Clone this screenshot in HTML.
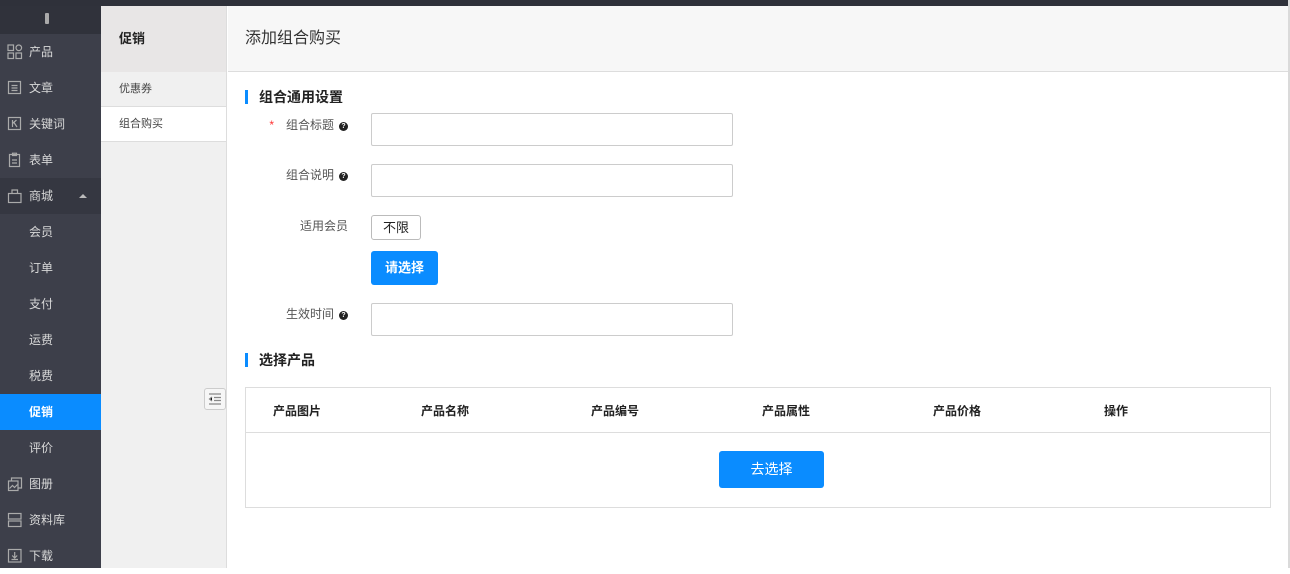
<!DOCTYPE html>
<html><head><meta charset="utf-8"><style>
*{margin:0;padding:0;box-sizing:border-box}
body{width:1290px;height:568px;overflow:hidden;background:#fff;font-family:"Liberation Sans","Noto Sans CJK SC",sans-serif;position:relative;font-size:12px}
.topbar{position:absolute;left:0;top:0;width:1290px;height:6px;background:#2f313a}
.side{position:absolute;left:0;top:0;width:101px;height:568px;background:#3d3f4a}
.logo{height:34px;background:#30323b;position:relative}
.logo i{position:absolute;left:45px;top:13px;width:4px;height:11px;background:#aaa;border-radius:1px}
.it{height:36px;line-height:36px;color:#d8d8d8;font-size:12px;position:relative;padding-left:29px}
.it svg{position:absolute;left:7px;top:10px}
.it.dk{background:#353741}
.it.act{background:#0a8cff;color:#fff;font-weight:bold}
.tri{position:absolute;left:79px;top:16px;border:4px solid transparent;border-bottom:4px solid #bbb;border-top:0}
.p2{position:absolute;left:101px;top:6px;width:126px;height:562px;background:#f0f0f0;border-right:1px solid #ddd}
.p2h{height:66px;background:#e8e6e6;line-height:66px;padding-left:18px;font-weight:bold;font-size:13px;color:#222}
.p2i{height:35px;line-height:35px;padding-left:18px;font-size:11px;color:#444;border-bottom:1px solid #ddd}
.coll{position:absolute;left:204px;top:388px;width:22px;height:22px;border:1px solid #ccc;border-radius:3px;background:#f6f6f6}
.mh{position:absolute;left:228px;top:6px;width:1060px;height:66px;background:#f7f7f7;border-bottom:1px solid #ddd;padding-left:17px;line-height:66px;font-size:16px;color:#333}
.rbar{position:absolute;left:1288px;top:0;width:2px;height:568px;background:#dadada}
.sec{position:absolute;left:245px;font-size:14px;font-weight:bold;color:#222;padding-left:11px;border-left:3px solid #0a8cff;line-height:14px}
.lab{position:absolute;width:120px;left:228px;text-align:right;font-size:12px;color:#555}
.q{display:inline-block;width:9px;height:9px;border-radius:50%;background:#222;color:#fff;font-size:7px;line-height:9px;text-align:center;font-weight:bold;margin-left:5px;vertical-align:1px}
.inp{position:absolute;left:371px;width:362px;height:33px;border:1px solid #ccc;border-radius:2px;background:#fff}
.btn{position:absolute;background:#0a8cff;color:#fff;border-radius:3px;text-align:center;font-weight:bold}
.tbl{position:absolute;left:245px;top:387px;width:1026px;height:121px;border:1px solid #ddd}
.th{position:absolute;top:14px;font-size:12px;color:#222;font-weight:bold}
</style></head><body>
<div class="side">
<div class="logo"><i></i></div>
<div class="it"><svg width="16" height="16" fill="none" stroke="#aaa" stroke-width="1.2"><rect x="1" y="1" width="5.5" height="5.5"/><rect x="1" y="9" width="5.5" height="5.5"/><rect x="9" y="9" width="5.5" height="5.5"/><circle cx="11.8" cy="3.8" r="2.8"/></svg>产品</div>
<div class="it"><svg width="16" height="16" fill="none" stroke="#aaa" stroke-width="1.2"><rect x="1.5" y="1.5" width="12" height="12"/><path d="M4.5 5.5h6M4.5 8h6M4.5 10.5h6"/></svg>文章</div>
<div class="it"><svg width="16" height="16" fill="none" stroke="#aaa" stroke-width="1.2"><rect x="1.5" y="1.5" width="12" height="12"/><path d="M5.5 4v7M5.5 7.5l4-3.5M7 6.5l3 4.5"/></svg>关键词</div>
<div class="it"><svg width="16" height="16" fill="none" stroke="#aaa" stroke-width="1.2"><rect x="2.5" y="2.5" width="10" height="12"/><path d="M5.5 1.2h4v2.3h-4zM5 8h5M5 11h5"/></svg>表单</div>
<div class="it dk"><svg width="16" height="16" fill="none" stroke="#aaa" stroke-width="1.2"><rect x="1.5" y="5.5" width="12.5" height="9"/><path d="M5 5.5V2h5.5v3.5"/></svg>商城<span class="tri"></span></div>
<div class="it">会员</div><div class="it">订单</div><div class="it">支付</div><div class="it">运费</div><div class="it">税费</div>
<div class="it act">促销</div><div class="it">评价</div>
<div class="it"><svg width="16" height="16" fill="none" stroke="#aaa" stroke-width="1.2"><rect x="1.5" y="5" width="9.5" height="9.5"/><path d="M4.5 5V2h10v10h-3.5M2.5 12.5l3-3 2 2 3-3"/></svg>图册</div>
<div class="it"><svg width="16" height="16" fill="none" stroke="#aaa" stroke-width="1.2"><rect x="1.5" y="1.5" width="12.5" height="5.5"/><rect x="1.5" y="9" width="12.5" height="5.5"/></svg>资料库</div>
<div class="it"><svg width="16" height="16" fill="none" stroke="#aaa" stroke-width="1.2"><rect x="1.5" y="1.5" width="12.5" height="12.5"/><path d="M7.7 4v6M5.2 7.5l2.5 2.5 2.5-2.5M4.5 11.5h6.5"/></svg>下载</div>
</div>
<div class="topbar"></div>
<div class="p2"><div class="p2h">促销</div><div class="p2i">优惠券</div><div class="p2i" style="background:#fff">组合购买</div></div>
<div class="coll"><svg width="20" height="20" stroke="#888" stroke-width="1.2"><path d="M4 5h12M9 8.5h7M9 11.5h7M4 15h12M7 8l-2.5 2L7 12"/></svg></div>
<div class="mh">添加组合购买</div>
<div class="rbar"></div>
<div class="sec" style="top:90px">组合通用设置</div>
<div class="lab" style="top:116px"><span style="color:#f33;margin-right:12px">*</span>组合标题<span class="q">?</span></div>
<div class="inp" style="top:113px"></div>
<div class="lab" style="top:166px">组合说明<span class="q">?</span></div>
<div class="inp" style="top:164px"></div>
<div class="lab" style="top:217px;width:120px">适用会员</div>
<div style="position:absolute;left:371px;top:215px;width:50px;height:25px;border:1px solid #bbb;border-radius:3px;text-align:center;line-height:23px;font-size:13px;color:#222">不限</div>
<div class="btn" style="left:371px;top:251px;width:67px;height:34px;line-height:34px;font-size:13px">请选择</div>
<div class="lab" style="top:305px">生效时间<span class="q">?</span></div>
<div class="inp" style="top:303px"></div>
<div class="sec" style="top:353px">选择产品</div>
<div class="tbl">
<div style="position:absolute;left:0;top:44px;width:100%;border-top:1px solid #ddd"></div>
<div class="th" style="left:27px">产品图片</div><div class="th" style="left:175px">产品名称</div><div class="th" style="left:345px">产品编号</div><div class="th" style="left:516px">产品属性</div><div class="th" style="left:687px">产品价格</div><div class="th" style="left:858px">操作</div>
<div class="btn" style="left:473px;top:63px;width:105px;height:37px;line-height:37px;font-size:14px;font-weight:normal">去选择</div>
</div>
</body></html>
